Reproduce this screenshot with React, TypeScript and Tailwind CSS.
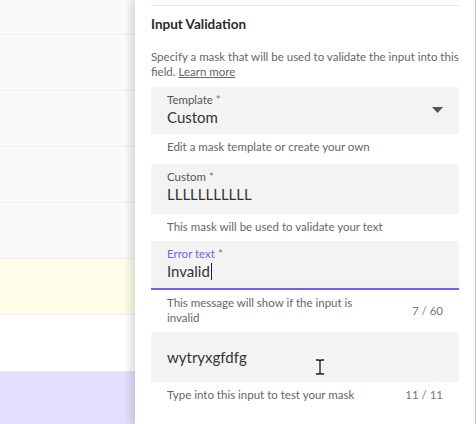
import React from "react";

const font = { fontFamily: "Lato, 'Noto Sans', sans-serif" };

function Field({
  label,
  value,
  active,
  select,
  caret,
  h = "h-[50px]",
}: {
  label?: string;
  value: string;
  active?: boolean;
  select?: boolean;
  caret?: boolean;
  h?: string;
}) {
  return (
    <div
      className={`relative flex ${h} flex-col rounded-t-[3px] bg-[#f3f3f3] px-4 ${
        label ? "justify-start pt-[5px]" : "justify-center"
      } ${active ? "border-b-2 border-[#7b5cf2]" : ""}`}
    >
      {label && (
        <div className={`text-[11.5px] leading-[15px] ${active ? "text-[#7b5cf2]" : "text-[#555]"}`}>
          {label} <span className="text-[#777]">*</span>
        </div>
      )}
      <div className="flex items-center text-[15px] leading-[20px] text-[#333]">
        {value}
        {caret && <span className="ml-px inline-block h-[17px] w-px bg-[#222]" />}
      </div>
      {select && (
        <svg className="absolute right-[16px] top-[20px]" width="11" height="6" viewBox="0 0 11 6">
          <path d="M0 0h11L5.5 6z" fill="#555" />
        </svg>
      )}
    </div>
  );
}

function Helper({ text, count, narrow }: { text: string; count?: string; narrow?: boolean }) {
  return (
    <div className="flex items-center justify-between px-4 pt-[5px] pb-[7px] text-[11.5px] leading-[15px] text-[#666]">
      <span className={narrow ? "max-w-[195px]" : ""}>{text}</span>
      {count && <span className="text-[#777]">{count}</span>}
    </div>
  );
}

export default function App() {
  return (
    <div className="flex h-[424px] w-[476px] overflow-hidden bg-white" style={font}>
      <div className="flex w-[135px] shrink-0 flex-col">
        <div className="h-[35px] border-b border-[#efefef] bg-[#fafafa]" />
        <div className="h-[56px] border-b border-[#efefef] bg-[#fafafa]" />
        <div className="h-[56px] border-b border-[#efefef] bg-[#fafafa]" />
        <div className="h-[56px] border-b border-[#efefef] bg-[#fafafa]" />
        <div className="h-[56px] border-b border-[#f3f3e6] bg-[#fafafa]" />
        <div className="h-[56px] border-b border-[#f0f0f0] bg-[#fdfde9]" />
        <div className="h-[57px] border-b border-[#e8e4fa] bg-white" />
        <div className="flex-1 bg-[#e4dffd]" />
      </div>
      <div className="relative z-10 flex flex-1 flex-col border-r border-[#c8c8c8] bg-white px-4 pt-[5px] shadow-[-5px_0_7px_rgba(0,0,0,0.13)]">
        <div className="border-t border-[#e6e6e6]" />
        <div className="pt-[9px] text-[13.5px] font-bold leading-[18px] text-[#2a2a2a]">Input Validation</div>
        <p className="pt-[16px] text-[11.5px] leading-[15px] text-[#666]">
          Specify a mask that will be used to validate the input into this field.{" "}
          <span className="underline">Learn more</span>
        </p>
        <div className="mt-[8px]">
          <Field label="Template" value="Custom" select h="h-[47px]" />
          <div className="pb-[3px]">
            <Helper text="Edit a mask template or create your own" />
          </div>
        </div>
        <Field label="Custom" value="LLLLLLLLLLL" />
        <Helper text="This mask will be used to validate your text" />
        <Field label="Error text" value="Invalid" active caret h="h-[49px]" />
        <Helper text="This message will show if the input is invalid" count="7 / 60" narrow />
        <div className="relative">
          <Field value="wytryxgfdfg" />
          <svg className="absolute left-[164px] top-[27px]" width="10" height="16" viewBox="0 0 10 16">
            <path d="M1 1h3l1 1 1-1h3M5 2v12M1 15h3l1-1 1 1h3" stroke="#fff" strokeWidth="3" fill="none" />
            <path d="M1 1h3l1 1 1-1h3M5 2v12M1 15h3l1-1 1 1h3" stroke="#111" strokeWidth="1.3" fill="none" />
          </svg>
        </div>
        <Helper text="Type into this input to test your mask" count="11 / 11" />
      </div>
    </div>
  );
}
